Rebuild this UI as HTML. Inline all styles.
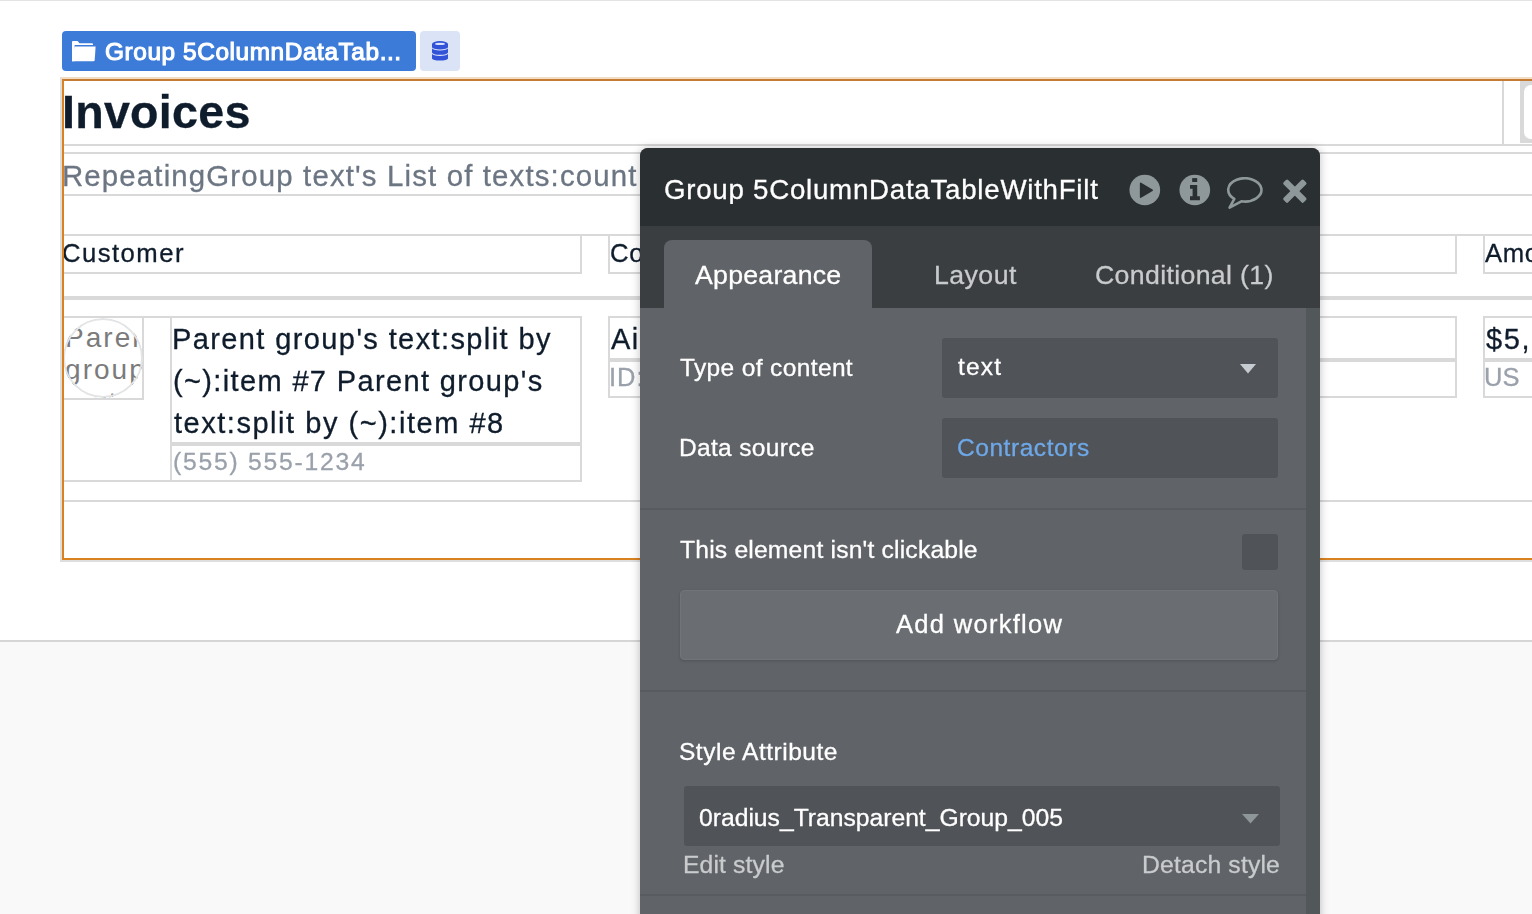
<!DOCTYPE html>
<html><head><meta charset="utf-8"><style>
html,body{margin:0;padding:0;}
body{width:1532px;height:914px;overflow:hidden;position:relative;background:#fff;font-family:"Liberation Sans",sans-serif;}
.t{position:absolute;white-space:nowrap;line-height:1;will-change:transform;-webkit-text-stroke:0.3px currentColor;}
</style></head><body>
<div style="position:absolute;left:0px;top:0px;width:1532px;height:1px;background:#e3e3e3"></div>
<div style="position:absolute;left:0px;top:640px;width:1532px;height:274px;background:#f9f9f9"></div>
<div style="position:absolute;left:0px;top:640px;width:1532px;height:2px;background:#d6d6d6"></div>
<div style="position:absolute;left:62px;top:31px;width:354px;height:40px;background:#3d7bd9;border-radius:4px"></div>
<svg style="position:absolute;left:72px;top:41px" width="24" height="21" viewBox="0 0 24 21"><path d="M0 1 Q0 0 1 0 H5.5 L7.5 2.2 H20 Q21 2.2 21 3.2 V4 H2.6 V20.3 H0 Z" fill="#fff"/><path d="M2.6 5.6 H23.6 L22.7 19.2 Q22.6 20.3 21.5 20.3 H0 Z" fill="#fff"/></svg>
<div class="t" style="left:104.77px;top:39.95px;font-size:24.4px;color:#ffffff;font-weight:400;letter-spacing:0.581px;-webkit-text-stroke:1.1px #fff;">Group 5ColumnDataTab...</div>
<div style="position:absolute;left:420px;top:31px;width:40px;height:40px;background:#dae4f6;border-radius:4px"></div>
<svg style="position:absolute;left:432px;top:41px" width="16" height="20" viewBox="0 0 16 20"><path d="M0 3 A8 3 0 0 1 16 3 V6.2 A8 2.2 0 0 1 0 6.2 Z" fill="#3253d8"/><ellipse cx="8" cy="2.9" rx="5" ry="1.15" fill="#dae4f6"/><path d="M0 7.3 A8 2.2 0 0 0 16 7.3 V11.6 A8 2.2 0 0 1 0 11.6 Z" fill="#3253d8"/><path d="M0 12.7 A8 2.2 0 0 0 16 12.7 V17.4 A8 2.2 0 0 1 0 17.4 Z" fill="#3253d8"/></svg>
<div class="t" style="left:62.08px;top:88.55px;font-size:46.6px;color:#0f1c2c;font-weight:700;letter-spacing:0.263px;">Invoices</div>
<div style="position:absolute;left:1502px;top:81px;width:2px;height:64px;background:#d9d9d9"></div>
<div style="position:absolute;left:1520px;top:81px;width:40px;height:62px;background:#d9d9d9"></div>
<div style="position:absolute;left:1524px;top:85px;width:36px;height:54px;background:#fff;border-radius:7px 0 0 7px"></div>
<div style="position:absolute;left:64px;top:144px;width:1468px;height:2px;background:#d9d9d9"></div>
<div style="position:absolute;left:64px;top:152px;width:1468px;height:2px;background:#d9d9d9"></div>
<div class="t" style="left:61.79px;top:161.11px;font-size:29.4px;color:#6c7683;font-weight:400;letter-spacing:1.150px;">RepeatingGroup text's List of texts:count</div>
<div style="position:absolute;left:64px;top:194px;width:1468px;height:2px;background:#d9d9d9"></div>
<div style="position:absolute;left:64px;top:234px;width:1468px;height:2px;background:#d9d9d9"></div>
<div style="position:absolute;left:62px;top:234px;width:516px;height:36px;border:2px solid #d9d9d9;"></div>
<div class="t" style="left:62.09px;top:240.94px;font-size:25.7px;color:#0f1c2c;font-weight:400;letter-spacing:1.448px;">Customer</div>
<div style="position:absolute;left:608px;top:234px;width:845px;height:36px;border:2px solid #d9d9d9;"></div>
<div class="t" style="left:609.69px;top:240.94px;font-size:25.7px;color:#0f1c2c;font-weight:400;letter-spacing:0.600px;">Contractor</div>
<div style="position:absolute;left:1483px;top:234px;width:113px;height:36px;border:2px solid #d9d9d9;"></div>
<div class="t" style="left:1484.95px;top:240.94px;font-size:25.7px;color:#0f1c2c;font-weight:400;letter-spacing:0.600px;">Amount</div>
<div style="position:absolute;left:64px;top:296px;width:1468px;height:4px;background:#d9d9d9"></div>
<div style="position:absolute;left:62px;top:316px;width:516px;height:162px;border:2px solid #d9d9d9;"></div>
<div style="position:absolute;left:62px;top:316px;width:78px;height:80px;border:2px solid #d9d9d9;"></div>
<div style="position:absolute;left:63px;top:318px;width:80px;height:80px;border-radius:50%;overflow:hidden"><div style="position:absolute;left:2.1px;top:4px;width:76px;font-size:28px;line-height:32.3px;letter-spacing:2px;color:#7b7b7b;white-space:normal;word-break:normal">Parent group's text</div><div style="position:absolute;left:0;top:0;width:80px;height:80px;border:2px solid #e3e4e6;border-radius:50%;box-sizing:border-box"></div></div>
<div style="position:absolute;left:170px;top:316px;width:408px;height:124px;border:2px solid #d9d9d9;"></div>
<div style="position:absolute;left:170px;top:444px;width:408px;height:34px;border:2px solid #d9d9d9;"></div>
<div class="t" style="left:172.22px;top:325.15px;font-size:29px;color:#0f1c2c;font-weight:400;letter-spacing:1.393px;">Parent group's text:split by</div>
<div class="t" style="left:172.80px;top:366.85px;font-size:29px;color:#0f1c2c;font-weight:400;letter-spacing:1.359px;">(~):item #7 Parent group's</div>
<div class="t" style="left:174.16px;top:408.55px;font-size:29px;color:#0f1c2c;font-weight:400;letter-spacing:1.528px;">text:split by (~):item #8</div>
<div class="t" style="left:173.27px;top:449.59px;font-size:24.7px;color:#9aa1ab;font-weight:400;letter-spacing:1.757px;">(555) 555-1234</div>
<div style="position:absolute;left:608px;top:316px;width:845px;height:40px;border:2px solid #d9d9d9;"></div>
<div style="position:absolute;left:608px;top:360px;width:845px;height:34px;border:2px solid #d9d9d9;"></div>
<div class="t" style="left:610.94px;top:324.95px;font-size:29px;color:#0f1c2c;font-weight:400;letter-spacing:1.500px;">Airbnb</div>
<div class="t" style="left:608.65px;top:364.91px;font-size:25.5px;color:#9aa1ab;font-weight:400;letter-spacing:1.000px;">ID: 123</div>
<div style="position:absolute;left:1483px;top:316px;width:113px;height:40px;border:2px solid #d9d9d9;"></div>
<div style="position:absolute;left:1483px;top:360px;width:113px;height:34px;border:2px solid #d9d9d9;"></div>
<div class="t" style="left:1485.89px;top:325.45px;font-size:29px;color:#0f1c2c;font-weight:400;letter-spacing:1.600px;">$5,000.00</div>
<div class="t" style="left:1484.43px;top:365.01px;font-size:25.5px;color:#9aa1ab;font-weight:400;letter-spacing:0.014px;">US</div>
<div style="position:absolute;left:64px;top:500px;width:1468px;height:2px;background:#d9d9d9"></div>
<div style="position:absolute;left:60px;top:77px;width:1480px;height:485px;border:2px solid #dedede;border-top-color:#f2dcc4;box-sizing:border-box"></div>
<div style="position:absolute;left:62px;top:79px;width:1478px;height:481px;border:2px solid #d9821f;border-top-color:#c67b35;box-sizing:border-box"></div>
<div style="position:absolute;left:640px;top:148px;width:680px;height:800px;border-radius:8px 8px 0 0;background:#606468;box-shadow:0 0 10px rgba(0,0,0,0.25);overflow:hidden">
<div style="position:absolute;left:0px;top:0px;width:680px;height:78px;background:#2a2f31"></div>
<div style="position:absolute;left:0px;top:78px;width:680px;height:82px;background:#3a3e41"></div>
<div style="position:absolute;left:24px;top:92px;width:208px;height:78px;background:#606468;border-radius:8px 8px 0 0"></div>
<div style="position:absolute;left:666px;top:160px;width:14px;height:640px;background:#52575a"></div>
</div>
<div class="t" style="left:664.11px;top:175.55px;font-size:27.7px;color:#ffffff;font-weight:400;letter-spacing:0.739px;width:436px;overflow:hidden;">Group 5ColumnDataTableWithFilt</div>
<svg style="position:absolute;left:1129px;top:174px" width="32" height="32" viewBox="0 0 32 32"><circle cx="15.8" cy="16" r="15.35" fill="#8e9799"/><path d="M11.7 9.4 L23.1 16.2 L11.7 23.1 Z" fill="#2a2f31" stroke="#2a2f31" stroke-width="1.7" stroke-linejoin="round"/></svg>
<svg style="position:absolute;left:1179px;top:174px" width="32" height="32" viewBox="0 0 32 32"><circle cx="15.8" cy="16" r="15.35" fill="#8e9799"/><rect x="13.2" y="4.1" width="5" height="3.9" fill="#2a2f31"/><path d="M11 11.1 H18.2 V22.3 H20.9 V26.2 H11 V22.3 H13.6 V14.8 H11 Z" fill="#2a2f31"/></svg>
<svg style="position:absolute;left:1226px;top:177px" width="38" height="34" viewBox="0 0 38 34"><path d="M8.3 21.9 A16.6 11.65 0 1 1 15.4 24.3 L3.6 30.6 Z" fill="none" stroke="#8e9799" stroke-width="2.6" stroke-linejoin="round"/></svg>
<svg style="position:absolute;left:1282px;top:178px" width="26" height="26" viewBox="0 0 26 26"><g fill="#8e9799" transform="translate(12.85 13.15)"><rect x="-14.2" y="-3.2" width="28.4" height="6.4" rx="1.6" transform="rotate(45)"/><rect x="-14.2" y="-3.2" width="28.4" height="6.4" rx="1.6" transform="rotate(-45)"/></g></svg>
<div class="t" style="left:694.95px;top:261.90px;font-size:26.7px;color:#ffffff;font-weight:400;letter-spacing:0.249px;">Appearance</div>
<div class="t" style="left:933.81px;top:261.90px;font-size:26.7px;color:#c9cacb;font-weight:400;letter-spacing:0.444px;">Layout</div>
<div class="t" style="left:1095.24px;top:261.90px;font-size:26.7px;color:#c9cacb;font-weight:400;letter-spacing:0.341px;">Conditional (1)</div>
<div class="t" style="left:680.15px;top:356.36px;font-size:24.5px;color:#ffffff;font-weight:400;letter-spacing:0.368px;">Type of content</div>
<div style="position:absolute;left:942px;top:338px;width:336px;height:60px;background:#505458;border-radius:3px"></div>
<div class="t" style="left:957.63px;top:355.46px;font-size:24.5px;color:#ffffff;font-weight:400;letter-spacing:1.187px;">text</div>
<svg style="position:absolute;left:1240px;top:364px" width="16" height="10" viewBox="0 0 16 10"><path d="M0 0 H16 L8 9.5 Z" fill="#c5cbd0"/></svg>
<div class="t" style="left:678.69px;top:436.16px;font-size:24.5px;color:#ffffff;font-weight:400;letter-spacing:0.330px;">Data source</div>
<div style="position:absolute;left:942px;top:418px;width:336px;height:60px;background:#505458;border-radius:3px"></div>
<div class="t" style="left:957.46px;top:435.56px;font-size:24.5px;color:#6ea8e8;font-weight:400;letter-spacing:0.550px;">Contractors</div>
<div style="position:absolute;left:640px;top:508px;width:666px;height:2px;background:#585c60"></div>
<div class="t" style="left:679.85px;top:538.39px;font-size:24.7px;color:#ffffff;font-weight:400;letter-spacing:0.176px;">This element isn't clickable</div>
<div style="position:absolute;left:1242px;top:534px;width:36px;height:36px;background:#505458;border-radius:3px"></div>
<div style="position:absolute;left:680px;top:590px;width:598px;height:70px;background:#6a6e72;border:1px solid #71757a;box-sizing:border-box;border-radius:4px;box-shadow:0 1px 3px rgba(0,0,0,0.18)"></div>
<div class="t" style="left:895.95px;top:612.41px;font-size:25.5px;color:#ffffff;font-weight:400;letter-spacing:1.304px;">Add workflow</div>
<div style="position:absolute;left:640px;top:690px;width:666px;height:2px;background:#585c60"></div>
<div class="t" style="left:679.29px;top:740.26px;font-size:24.5px;color:#ffffff;font-weight:400;letter-spacing:0.520px;">Style Attribute</div>
<div style="position:absolute;left:684px;top:786px;width:596px;height:60px;background:#505458;border-radius:3px"></div>
<div class="t" style="left:699.44px;top:806.09px;font-size:24.7px;color:#ffffff;font-weight:400;letter-spacing:-0.009px;">0radius_Transparent_Group_005</div>
<svg style="position:absolute;left:1242px;top:814px" width="17" height="10" viewBox="0 0 17 10"><path d="M0 0 H17 L8.5 9.5 Z" fill="#8e9699"/></svg>
<div class="t" style="left:682.87px;top:853.29px;font-size:24.7px;color:#c9cbcd;font-weight:400;letter-spacing:0.135px;">Edit style</div>
<div class="t" style="left:1142.47px;top:853.29px;font-size:24.7px;color:#c9cbcd;font-weight:400;letter-spacing:0.183px;">Detach style</div>
<div style="position:absolute;left:640px;top:894px;width:666px;height:2px;background:#585c60"></div>
</body></html>
